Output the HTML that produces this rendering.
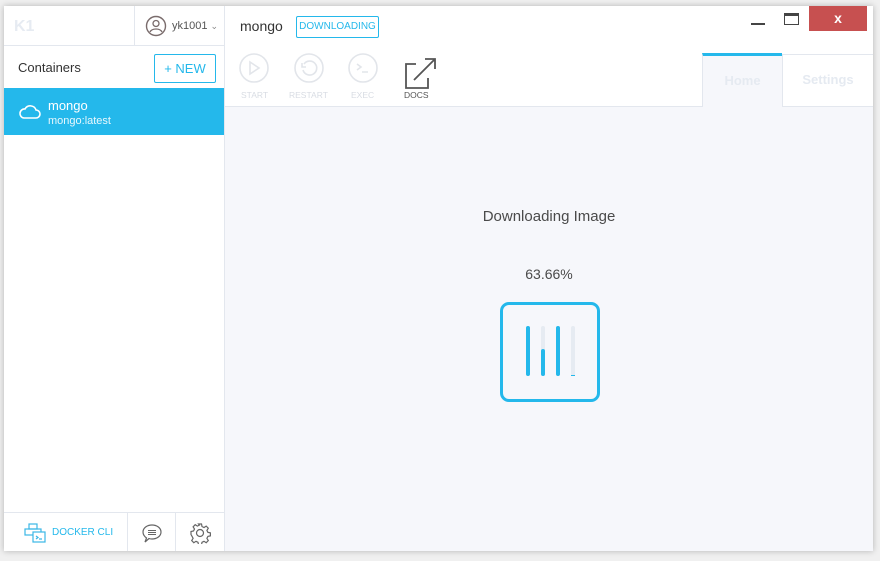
<!DOCTYPE html>
<html><head><style>
*{box-sizing:border-box;margin:0;padding:0}
body{width:880px;height:561px;background:#f0f0f0;font-family:"Liberation Sans",sans-serif;position:relative;overflow:hidden}
.win{position:absolute;left:4px;top:6px;width:869px;height:545px;background:#fff;box-shadow:0 0 6px rgba(0,0,0,.25)}
.side{position:absolute;left:0;top:0;width:221px;height:545px;border-right:1px solid #e3e7ee;background:#fff}
.abs{position:absolute}
.main{position:absolute;left:221px;top:100px;width:648px;height:445px;background:#f6f7fb}
</style></head><body>
<div class="win">
 <div class="side">
  <div class="abs" style="left:0;top:0;width:221px;height:40px;border-bottom:1px solid #e3e7ee"></div>
  <div class="abs" style="left:130px;top:0;width:1px;height:40px;background:#e3e7ee"></div>
  <div class="abs" style="left:10px;top:12px;font-weight:bold;font-size:16px;color:#e6ebf2">K1</div>
  <svg class="abs" style="left:141px;top:9px" width="22" height="22"><circle cx="11" cy="11" r="9.5" fill="none" stroke="#7a6c6c" stroke-width="1.4"/><circle cx="11" cy="8.5" r="3" fill="none" stroke="#7a6c6c" stroke-width="1.3"/><path d="M5 17c2-4 10-4 12 0" fill="none" stroke="#7a6c6c" stroke-width="1.3"/></svg>
  <div class="abs" style="left:168px;top:14px;font-size:11px;color:#555">yk1001 <span style="font-size:9px;color:#888">&#8964;</span></div>
  <div class="abs" style="left:14px;top:54px;font-size:13px;color:#333">Containers</div>
  <div class="abs" style="left:150px;top:48px;width:62px;height:29px;border:1px solid #24b8eb;border-radius:2px;color:#24b8eb;font-size:13px;line-height:27px;text-align:center">+ NEW</div>
  <div class="abs" style="left:0;top:82px;width:220px;height:47px;background:#24b8eb"></div>
  <svg class="abs" style="left:14px;top:96px" width="24" height="18"><path d="M6 16h12a4 4 0 0 0 0-8 6 6 0 0 0-11-1 4.5 4.5 0 0 0-1 9z" fill="none" stroke="#fff" stroke-width="1.6"/></svg>
  <div class="abs" style="left:44px;top:92px;font-size:13px;color:#fff">mongo</div>
  <div class="abs" style="left:44px;top:109px;font-size:11px;color:#e8f7fd">mongo:latest</div>
  <div class="abs" style="left:0;top:506px;width:221px;height:1px;background:#e3e7ee"></div>
  <div class="abs" style="left:123px;top:506px;width:1px;height:39px;background:#e3e7ee"></div>
  <div class="abs" style="left:171px;top:506px;width:1px;height:39px;background:#e3e7ee"></div>
  <svg class="abs" style="left:20px;top:516px" width="24" height="22"><g fill="none" stroke="#3bb7e6" stroke-width="1.2"><rect x="1" y="7" width="16" height="6"/><rect x="5" y="2" width="8" height="5"/><rect x="9" y="10" width="12" height="10" fill="#fff"/><path d="M12 14l2 1.5-2 1.5M15 17h3"/></g></svg>
  <div class="abs" style="left:48px;top:521px;font-size:10px;color:#24b8eb">DOCKER CLI</div>
  <svg class="abs" style="left:137px;top:516px" width="22" height="22"><path d="M11 3c5 0 9 3 9 7s-4 7-9 7c-1 0-2 0-3-.5L4 20l1.5-4C3.5 14.5 2 12.5 2 10c0-4 4-7 9-7z" fill="none" stroke="#666" stroke-width="1.2"/><path d="M7 8.5h8M7 10.5h8M7 12.5h8" stroke="#666"/></svg>
  <svg class="abs" style="left:185px;top:516px" width="22" height="22"><circle cx="11" cy="11" r="3.5" fill="none" stroke="#666" stroke-width="1.2"/><path d="M9.5 2h3l.5 2.5 2 1 2.2-1.4 2.1 2.1-1.4 2.2 1 2 2.5.5v3l-2.5.5-1 2 1.4 2.2-2.1 2.1-2.2-1.4-2 1-.5 2.5h-3l-.5-2.5-2-1-2.2 1.4-2.1-2.1 1.4-2.2-1-2L2 12.5v-3l2.5-.5 1-2-1.4-2.2 2.1-2.1 2.2 1.4 2-1z" fill="none" stroke="#666" stroke-width="1.2"/></svg>
 </div>
 <div class="abs" style="left:236px;top:12px;font-size:14px;color:#333">mongo</div>
 <div class="abs" style="left:292px;top:10px;width:83px;height:22px;border:1px solid #24b8eb;border-radius:2px;color:#24b8eb;font-size:10px;line-height:20px;text-align:center">DOWNLOADING</div>
 <div class="abs" style="left:747px;top:17px;width:14px;height:2px;background:#444"></div>
 <div class="abs" style="left:780px;top:7px;width:15px;height:12px;border:1.5px solid #444;border-top-width:3px"></div>
 <div class="abs" style="left:805px;top:0;width:58px;height:25px;background:#c75050;color:#fff;font-weight:bold;font-size:14px;text-align:center;line-height:24px">x</div>
 <svg class="abs" style="left:234px;top:47px" width="200" height="50"><g fill="none" stroke="#e2e5ea" stroke-width="1.6"><circle cx="16" cy="15" r="14"/><path d="M12 9l9 6-9 6z"/><circle cx="71" cy="15" r="14"/><path d="M66 11a7 7 0 1 1-1 6M64 10v4h4"/><circle cx="125" cy="15" r="14"/><path d="M119 11l4 3-4 3M124 19h6"/></g><g fill="none" stroke="#555" stroke-width="1.8"><path d="M178 11h-10v24h22V25M176 27l21-21M187 6h10v10"/></g></svg>
 <div class="abs" style="left:237px;top:84px;font-size:8.5px;color:#d8dce3">START</div>
 <div class="abs" style="left:285px;top:84px;font-size:8.5px;color:#d8dce3">RESTART</div>
 <div class="abs" style="left:347px;top:84px;font-size:8.5px;color:#d8dce3">EXEC</div>
 <div class="abs" style="left:400px;top:84px;font-size:8.5px;color:#555">DOCS</div>
 <div class="main"></div>
 <div class="abs" style="left:221px;top:100px;width:648px;height:1px;background:#e3e7ee"></div>
 <div class="abs" style="left:698px;top:47px;width:80px;height:54px;background:#f6f7fb;border-left:1px solid #e3e7ee;border-top:3px solid #24b8eb;color:#e5eaf1;font-weight:bold;font-size:13px;text-align:center;line-height:50px">Home</div>
 <div class="abs" style="left:778px;top:48px;width:91px;height:52px;border-left:1px solid #e3e7ee;border-top:1px solid #e3e7ee;color:#e5eaf1;font-weight:bold;font-size:13px;text-align:center;line-height:50px">Settings</div>
 <div class="abs" style="left:221px;top:202px;width:648px;text-align:center;font-size:15px;color:#4a4a4a">Downloading Image</div>
 <div class="abs" style="left:221px;top:260px;width:648px;text-align:center;font-size:14px;color:#4a4a4a">63.66%</div>
 <div class="abs" style="left:496px;top:296px;width:100px;height:100px;border:3px solid #24b8eb;border-radius:9px"></div>
 <div class="abs" style="left:522px;top:320px;width:4px;height:50px;background:#24b8eb;border-radius:2px"></div>
 <div class="abs" style="left:537px;top:320px;width:4px;height:50px;background:#e6ebf2;border-radius:2px"></div>
 <div class="abs" style="left:537px;top:343px;width:4px;height:27px;background:#24b8eb;border-radius:2px"></div>
 <div class="abs" style="left:552px;top:320px;width:4px;height:50px;background:#24b8eb;border-radius:2px"></div>
 <div class="abs" style="left:567px;top:320px;width:4px;height:50px;background:#e6ebf2;border-radius:2px"></div>
 <div class="abs" style="left:567px;top:369px;width:4px;height:1px;background:#24b8eb"></div>
</div>
</body></html>
